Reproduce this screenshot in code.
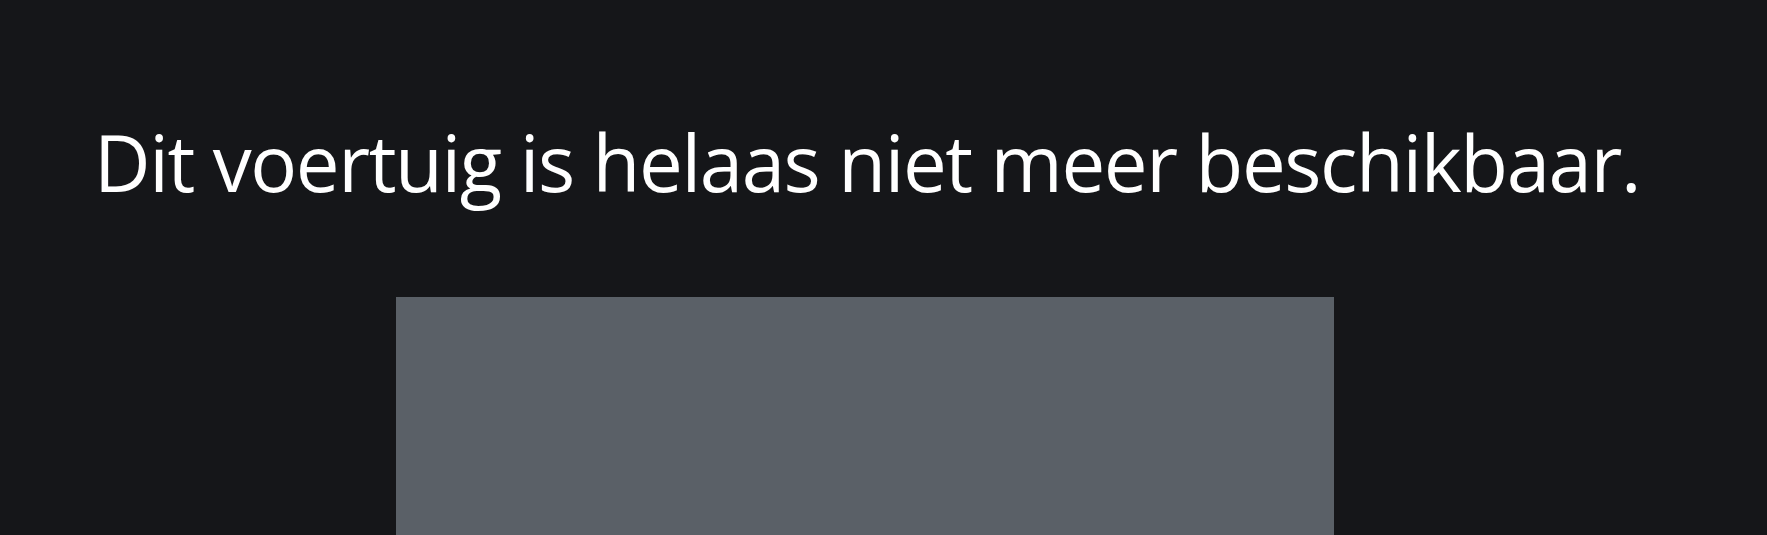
import React from 'react';

const App: React.FC = () => {
  return (
    <div
      className="min-h-[535px] h-[535px] overflow-hidden bg-[#151619] text-white"
      style={{ fontFamily: '"Open Sans", "Noto Sans", sans-serif' }}
    >
      <div className="ml-[94px] w-[1540px] pt-[112px]">
        {/* melding: voertuig niet beschikbaar */}
        <h1 className="text-[78px] leading-[100px] font-normal tracking-[-1.4px] whitespace-nowrap">
          Dit voertuig is helaas niet meer beschikbaar.
        </h1>
        <div className="mt-[85px] ml-[302px] w-[938px] h-[300px] bg-[#5a6067]" />
      </div>
    </div>
  );
};

export default App;
